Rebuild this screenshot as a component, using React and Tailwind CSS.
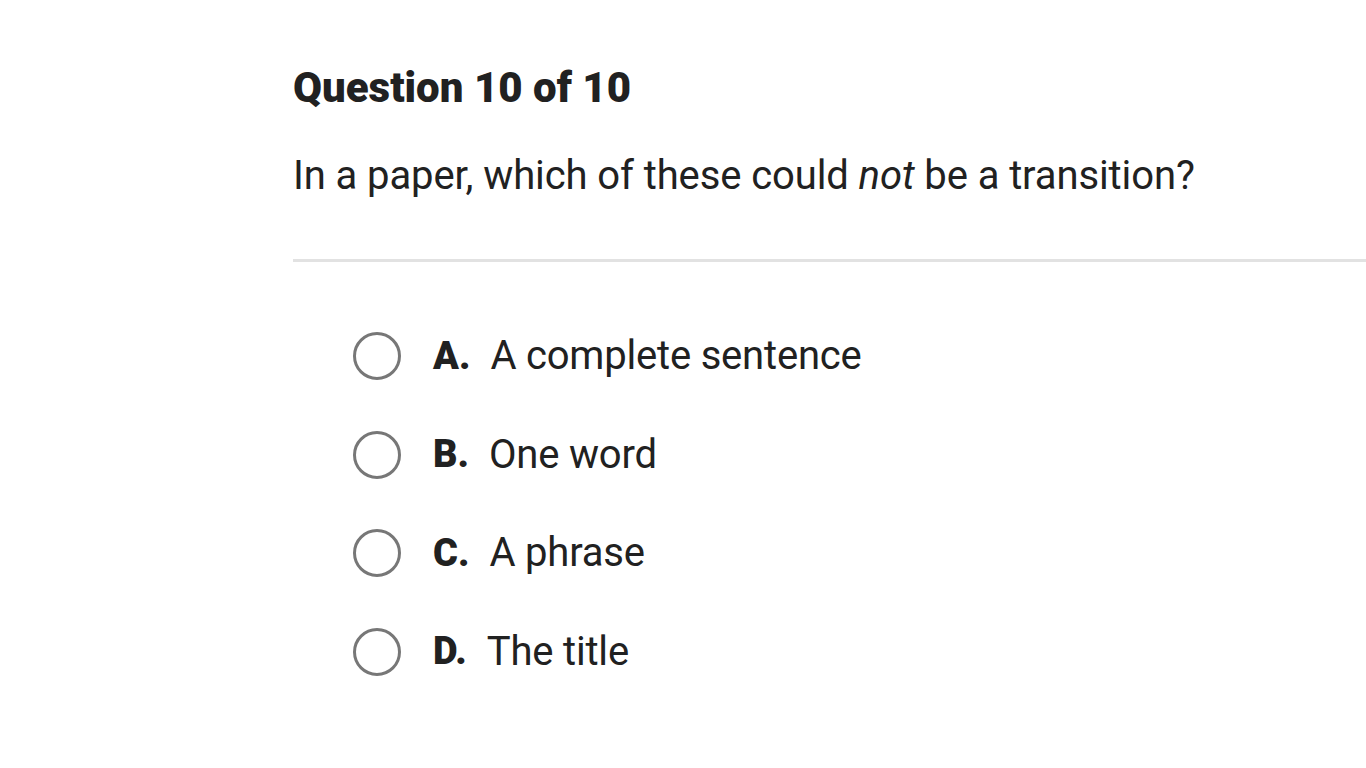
export default function App() {
  const options = [
    { l: "A.", t: "A complete sentence" },
    { l: "B.", t: "One word" },
    { l: "C.", t: "A phrase" },
    { l: "D.", t: "The title" },
  ];
  return (
    <div className="w-[1366px] h-[768px] bg-white overflow-hidden text-[#212121]" style={{ fontFamily: "Roboto, 'Liberation Sans', sans-serif" }}>
      <div className="pl-[293px] pt-[62px]">
        <h1 className="text-[42px] font-black leading-[52px]">Question 10 of 10</h1>
        <p className="mt-[38px] text-[40px] leading-[48px] tracking-[-0.1px]">
          In a paper, which of these could <em>not</em> be a transition?
        </p>
        <div className="mt-[59px] h-[3px] bg-[#e2e2e2]" />
        <div className="pl-[60px] pt-[69px] flex flex-col gap-[48.5px]">
          {options.map((o) => (
            <div key={o.l} className="flex items-center h-[50px]">
              <div className="w-[48px] h-[48px] rounded-full border-[3px] border-[#777777]" />
              <span className="ml-[32px] mr-[20px] text-[38px] font-black">{o.l}</span>
              <span className="text-[40px] tracking-[-0.2px]">{o.t}</span>
            </div>
          ))}
        </div>
      </div>
    </div>
  );
}
